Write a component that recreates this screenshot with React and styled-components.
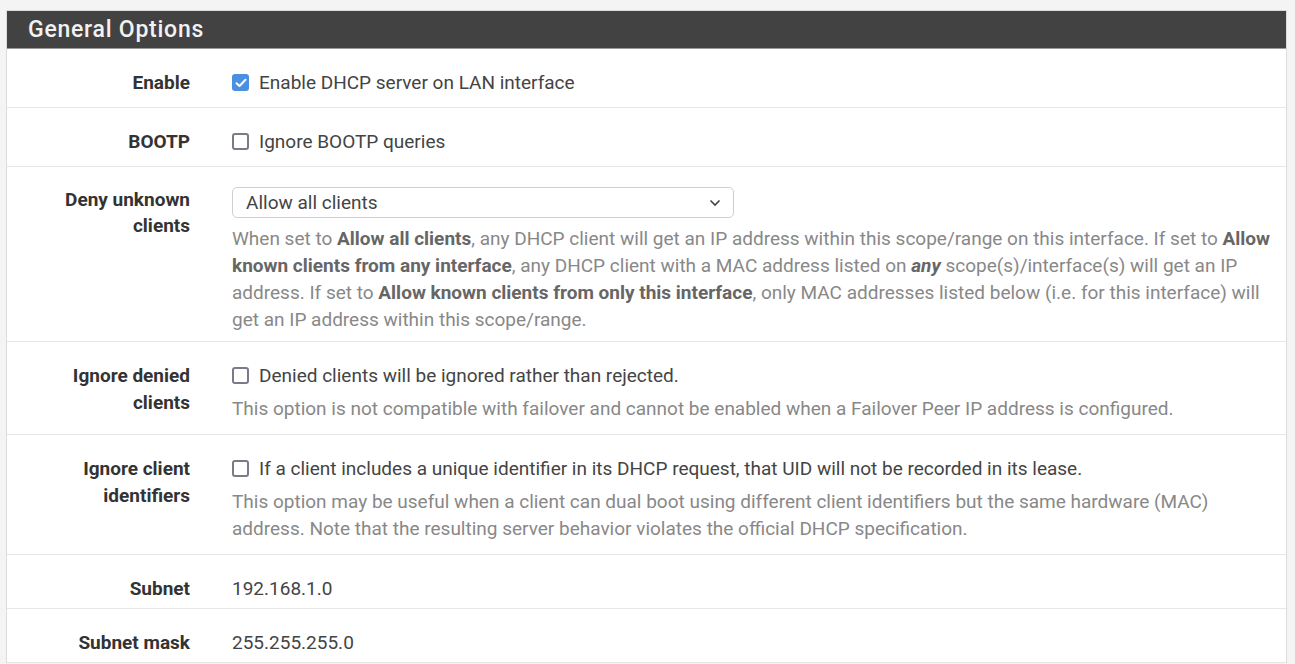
import React from "react";
import styled, { createGlobalStyle } from "styled-components";

const GlobalStyle = createGlobalStyle`
  body {
    margin: 0;
    background: #f4f4f4;
    font-family: Roboto, "Liberation Sans", sans-serif;
  }
`;

const Page = styled.div`
  padding: 10px 8px 0 6px;
`;

const Panel = styled.section`
  border: 1px solid #dcdcdc;
  border-bottom: none;
  background: #ffffff;
`;

const PanelHeading = styled.h2`
  margin: 0;
  height: 37px;
  display: flex;
  align-items: center;
  padding: 0 21px;
  background: #424242;
  border-bottom: 1px solid #9a9a9a;
  color: #f2f2f2;
  font-size: 23px;
  font-weight: 500;
  letter-spacing: 0.75px;
`;

const Row = styled.div`
  display: grid;
  grid-template-columns: 183px 1fr;
  column-gap: 42px;
  padding: 20px 12px ${(p) => p.$bottom ?? 6}px 0;
  border-bottom: 1px solid #e6e6e6;
  font-size: 19px;
  line-height: 27px;
`;

const Label = styled.div`
  text-align: right;
  font-weight: 700;
  color: #333333;
  line-height: ${(p) => p.$lh || 27}px;
`;

const Content = styled.div`
  color: #444444;
`;

const CheckLine = styled.label`
  display: flex;
  align-items: center;
  gap: 10px;
  margin-top: ${(p) => p.$mt || 0}px;
`;

const Box = styled.span`
  flex: 0 0 auto;
  width: 17px;
  height: 17px;
  box-sizing: border-box;
  border-radius: 3px;
  border: ${(p) => (p.$checked ? "none" : "2px solid #7b7b87")};
  background: ${(p) => (p.$checked ? "#4a8fe2" : "#ffffff")};
  display: flex;
  align-items: center;
  justify-content: center;
`;

const Help = styled.div`
  margin-top: ${(p) => p.$mt || 6}px;
  margin-bottom: 6px;
  color: #888888;

  b {
    color: #666666;
  }
`;

const Select = styled.div`
  width: 502px;
  height: 31px;
  box-sizing: border-box;
  border: 1px solid #cfcfcf;
  border-radius: 5px;
  padding: 0 12px 0 13px;
  display: flex;
  align-items: center;
  justify-content: space-between;
  color: #444444;
`;

const Value = styled.div`
  color: #444444;
`;

const Checkbox = ({ checked }) => (
  <Box $checked={checked}>
    {checked && (
      <svg width="12" height="10" viewBox="0 0 12 10">
        <path
          d="M1.5 5.2 L4.5 8 L10.5 1.8"
          fill="none"
          stroke="#ffffff"
          strokeWidth="2"
          strokeLinecap="round"
          strokeLinejoin="round"
        />
      </svg>
    )}
  </Box>
);

export default function App() {
  return (
    <Page>
      <GlobalStyle />
      <Panel>
        <PanelHeading>General Options</PanelHeading>

        <Row $bottom={11}>
          <Label>Enable</Label>
          <Content>
            <CheckLine>
              <Checkbox checked />
              Enable DHCP server on LAN interface
            </CheckLine>
          </Content>
        </Row>

        <Row $bottom={11}>
          <Label>BOOTP</Label>
          <Content>
            <CheckLine>
              <Checkbox />
              Ignore BOOTP queries
            </CheckLine>
          </Content>
        </Row>

        <Row $bottom={2}>
          <Label $lh={26}>
            Deny unknown
            <br />
            clients
          </Label>
          <Content>
            <Select>
              <span>Allow all clients</span>
              <svg width="12" height="8" viewBox="0 0 12 8">
                <path
                  d="M1.5 1.5 L6 6 L10.5 1.5"
                  fill="none"
                  stroke="#444"
                  strokeWidth="1.6"
                />
              </svg>
            </Select>
            <Help $mt={7}>
              When set to <b>Allow all clients</b>, any DHCP client will get an IP
              address within this scope/range on this interface. If set to{" "}
              <b>Allow known clients from any interface</b>, any DHCP client with a
              MAC address listed on{" "}
              <b>
                <i>any</i>
              </b>{" "}
              scope(s)/interface(s) will get an IP address. If set to{" "}
              <b>Allow known clients from only this interface</b>, only MAC
              addresses listed below (i.e. for this interface) will get an IP
              address within this scope/range.
            </Help>
          </Content>
        </Row>

        <Row>
          <Label>
            Ignore denied
            <br />
            clients
          </Label>
          <Content>
            <CheckLine>
              <Checkbox />
              Denied clients will be ignored rather than rejected.
            </CheckLine>
            <Help>
              This option is not compatible with failover and cannot be enabled
              when a Failover Peer IP address is configured.
            </Help>
          </Content>
        </Row>

        <Row>
          <Label>
            Ignore client
            <br />
            identifiers
          </Label>
          <Content>
            <CheckLine>
              <Checkbox />
              If a client includes a unique identifier in its DHCP request, that
              UID will not be recorded in its lease.
            </CheckLine>
            <Help>
              This option may be useful when a client can dual boot using
              different client identifiers but the same hardware (MAC) address.
              Note that the resulting server behavior violates the official DHCP
              specification.
            </Help>
          </Content>
        </Row>

        <Row>
          <Label>Subnet</Label>
          <Value>192.168.1.0</Value>
        </Row>

        <Row>
          <Label>Subnet mask</Label>
          <Value>255.255.255.0</Value>
        </Row>
      </Panel>
    </Page>
  );
}
